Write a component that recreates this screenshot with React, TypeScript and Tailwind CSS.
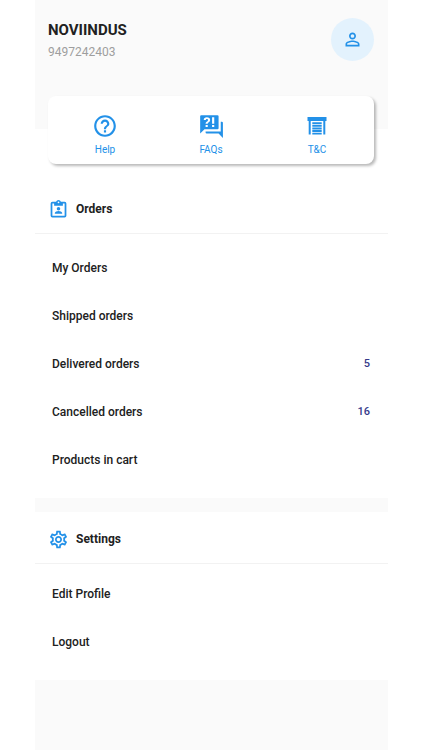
import React from 'react';
import type { FC, ReactNode } from 'react';
import { MdHelpOutline, MdOutlineSettings, MdPersonOutline } from 'react-icons/md';

interface MenuItem {
  label: string;
  count?: number;
}

interface SectionProps {
  title: string;
  icon: ReactNode;
  items: MenuItem[];
  listClass: string;
}

const orderItems: MenuItem[] = [
  { label: 'My Orders' },
  { label: 'Shipped orders' },
  { label: 'Delivered orders', count: 5 },
  { label: 'Cancelled orders', count: 16 },
  { label: 'Products in cart' },
];

const settingItems: MenuItem[] = [{ label: 'Edit Profile' }, { label: 'Logout' }];

const FaqIcon: FC = () => (
  <svg className="h-[26px] w-[26px]" viewBox="0 0 24 24" fill="currentColor" aria-hidden="true">
    <path d="M18,15H6L2,19V3A1,1 0 0,1 3,2H18A1,1 0 0,1 19,3V14A1,1 0 0,1 18,15M23,9V23L19,19H8A1,1 0 0,1 7,18V17H21V8H22A1,1 0 0,1 23,9M8.19,4C7.32,4 6.62,4.2 6.08,4.59C5.56,5 5.3,5.57 5.31,6.36L5.32,6.39H7.25C7.26,6.09 7.35,5.86 7.53,5.7C7.71,5.55 7.93,5.47 8.19,5.47C8.5,5.47 8.76,5.57 8.94,5.75C9.12,5.94 9.2,6.2 9.2,6.5C9.2,6.82 9.13,7.09 8.97,7.32C8.83,7.55 8.62,7.75 8.36,7.91C7.85,8.25 7.5,8.55 7.31,8.82C7.11,9.08 7,9.5 7,10H9C9,9.69 9.04,9.44 9.13,9.26C9.22,9.08 9.39,8.9 9.64,8.74C10.09,8.5 10.46,8.21 10.75,7.81C11.04,7.41 11.19,7 11.19,6.5C11.19,5.74 10.92,5.13 10.38,4.68C9.85,4.23 9.12,4 8.19,4M7,11V13H9V11H7M13,13H15V11H13V13M13,4V10H15V4H13Z" />
  </svg>
);

const TermsIcon: FC = () => (
  <svg className="h-[26px] w-[26px]" viewBox="0 0 26 26" fill="currentColor" aria-hidden="true">
    <path d="M3.5 4h19v4h-1.2v13.6h-2V8H6.7v13.6h-2V8H3.5z" />
    <path d="M8.3 9.2h9.4v2H8.3zM8.3 11.9h9.4v1.9H8.3zM8.3 14.5h9.4v1.9H8.3zM8.3 17.1h9.4V19H8.3zM8.3 19.7h9.4v1.9H8.3z" />
  </svg>
);

const OrdersIcon: FC = () => (
  <svg className="h-[21px] w-[21px]" viewBox="0 0 24 24" fill="currentColor" aria-hidden="true">
    <path
      fillRule="evenodd"
      d="M19 3h-4.2a3 3 0 0 0-5.6 0H5a2 2 0 0 0-2 2v14a2 2 0 0 0 2 2h14a2 2 0 0 0 2-2V5a2 2 0 0 0-2-2zM12 2.8a1 1 0 0 1 0 2 1 1 0 0 1 0-2zM5 5h2v2.6h10V5h2v14H5z"
    />
    <circle cx="12" cy="11" r="2" />
    <path d="M7.8 16.8v-.8c0-1.5 2.6-2.4 4.2-2.4s4.2.9 4.2 2.4v.8z" />
  </svg>
);

const shortcuts = [
  { label: 'Help', icon: <MdHelpOutline className="h-[26px] w-[26px]" /> },
  { label: 'FAQs', icon: <FaqIcon /> },
  { label: 'T&C', icon: <TermsIcon /> },
];

const Section: FC<SectionProps> = ({ title, icon, items, listClass }) => (
  <section className="bg-white">
    <div className="flex items-center gap-[7px] border-b border-[#f2f2f2] px-[13px] pt-[15px] pb-3">
      <span className="text-[#2391e8]">{icon}</span>
      <h2 className="text-xs leading-6 font-bold">{title}</h2>
    </div>
    <ul className={listClass}>
      {items.map((item) => (
        <li key={item.label}>
          <button className="flex h-12 w-full items-center justify-between pr-[18px] pl-[17px] text-left text-xs font-medium">
            <span>{item.label}</span>
            {item.count !== undefined && <span className="text-[11px] text-[#36398a]">{item.count}</span>}
          </button>
        </li>
      ))}
    </ul>
  </section>
);

const App: FC = () => {
  return (
    <div className="min-h-screen bg-white pr-[34px] pl-[35px] font-[Roboto,sans-serif] text-[#212121]">
      <main className="flex min-h-screen flex-col bg-[#fafafa]">
        <header className="flex items-start justify-between pt-[18px] pr-[14px] pb-[66px] pl-[13px]">
          <div>
            <h1 className="text-[15px] leading-6 font-bold">NOVIINDUS</h1>
            <p className="text-xs leading-[21px] text-[#9e9e9e]">9497242403</p>
          </div>
          <button
            aria-label="Profile"
            className="flex h-[43px] w-[43px] items-center justify-center rounded-full bg-[#e3f2fd] text-[#2391e8]"
          >
            <MdPersonOutline className="h-[21px] w-[21px]" />
          </button>
        </header>

        <div className="bg-white pr-[14px] pb-[18px] pl-[13px]">
          <nav className="relative -mt-[33px] flex rounded-lg bg-white px-1 pt-[17px] pb-[6px] shadow-[2px_2px_3px_rgba(0,0,0,0.28)]">
            {shortcuts.map(({ label, icon }) => (
              <button key={label} className="flex flex-1 flex-col items-center gap-[3px] text-[#2391e8]">
                {icon}
                <span className="text-[10px] leading-4">{label}</span>
              </button>
            ))}
          </nav>
        </div>

        <Section title="Orders" icon={<OrdersIcon />} items={orderItems} listClass="pt-[10px] pb-[14px]" />
        <div className="h-[14px]" />
        <Section
          title="Settings"
          icon={<MdOutlineSettings className="h-[21px] w-[21px]" />}
          items={settingItems}
          listClass="pt-[6px] pb-[14px]"
        />
      </main>
    </div>
  );
};

export default App;
